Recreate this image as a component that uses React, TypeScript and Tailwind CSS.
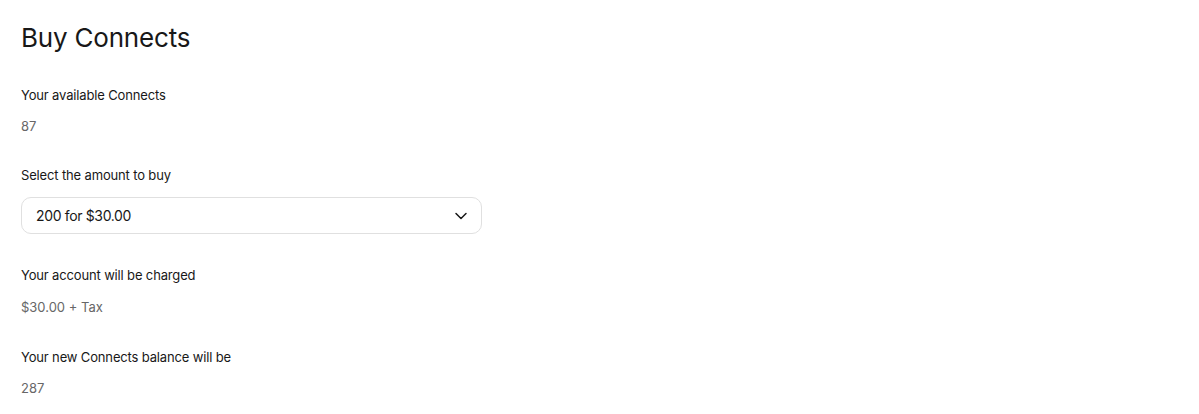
import React from "react";

export default function App() {
  return (
    <div className="min-h-screen bg-white px-[21px] pt-[22px] text-[#181818]" style={{ fontFamily: "Inter, 'Liberation Sans', sans-serif" }}>
      <h1 className="text-[26px] leading-[32px] font-normal tracking-[-0.2px]">Buy Connects</h1>
      <div className="mt-[31px] flex flex-col">
        <div className="text-[13px] leading-[20px] tracking-[-0.15px]">Your available Connects</div>
        <div className="mt-[11px] text-[13px] leading-[20px] text-[#676767]">87</div>

        <div className="mt-[29px] text-[13px] leading-[20px] tracking-[-0.15px]">Select the amount to buy</div>
        <div className="mt-[12px] flex h-[37px] w-[461px] items-center justify-between rounded-[10px] border border-[#e0e0e0] pl-[14px] pr-[13px]">
          <span className="text-[14px] tracking-[-0.35px] text-[#181818]">200 for $30.00</span>
          <svg width="14" height="14" viewBox="0 0 14 14" fill="none">
            <path d="M2 4.5l5 5 5-5" stroke="#181818" strokeWidth="1.5" strokeLinecap="round" strokeLinejoin="round" />
          </svg>
        </div>

        <div className="mt-[31px] text-[13px] leading-[20px] tracking-[-0.15px]">Your account will be charged</div>
        <div className="mt-[12px] text-[13px] leading-[20px] text-[#676767]">$30.00 + Tax</div>

        <div className="mt-[30px] text-[13px] leading-[20px] tracking-[-0.15px]">Your new Connects balance will be</div>
        <div className="mt-[11px] text-[13px] leading-[20px] text-[#676767]">287</div>
      </div>
    </div>
  );
}
